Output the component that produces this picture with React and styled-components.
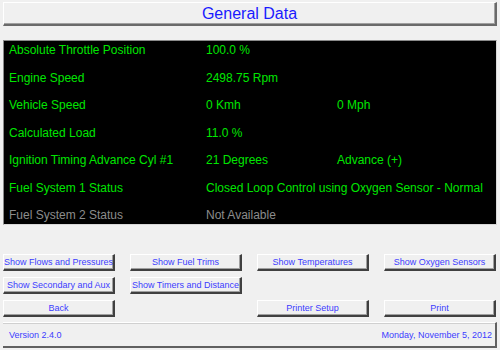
import React from "react";
import styled, { createGlobalStyle } from "styled-components";

const GlobalStyle = createGlobalStyle`
  html, body {
    margin: 0;
    padding: 0;
    background: #f0f0f0;
  }
  body {
    font-family: "Liberation Sans", Arial, sans-serif;
  }
`;

const Screen = styled.div`
  width: 500px;
  height: 350px;
  box-sizing: border-box;
  padding: 2px 3px 0 3px;
  display: flex;
  flex-direction: column;
  background: #f0f0f0;
  overflow: hidden;
`;

const TitleBar = styled.div`
  height: 24px;
  box-sizing: border-box;
  border-top: 1px solid #ffffff;
  border-left: 1px solid #ffffff;
  border-right: 2px solid #6a6a6a;
  border-bottom: 2px solid #6a6a6a;
  box-shadow: inset -1px -1px 0 #a0a0a0;
  display: flex;
  align-items: center;
  justify-content: center;
  font-size: 16px;
  color: #1a1aff;
`;

const DataPanel = styled.div`
  margin-top: 14px;
  height: 185px;
  box-sizing: border-box;
  background: #000;
  border-top: 1px solid #8a8a8a;
  border-left: 1px solid #8a8a8a;
  border-right: 1px solid #d8d8d8;
  border-bottom: 1px solid #d8d8d8;
  padding: 2px 0 0 5px;
  display: grid;
  grid-template-columns: 197px 131px 1fr;
  grid-auto-rows: 14px;
  row-gap: 13.5px;
  font-size: 12px;
  line-height: 14px;
`;

const Cell = styled.div`
  color: ${(p) => (p.$dim ? "#8c8c8c" : "#00e600")};
  grid-column: ${(p) => p.$span || "auto"};
  white-space: nowrap;
`;

const ButtonGrid = styled.div`
  margin-top: 29px;
  display: grid;
  grid-template-columns: repeat(4, 112px);
  grid-auto-rows: 17px;
  column-gap: 15px;
  row-gap: 6px;
`;

const PanelButton = styled.button`
  grid-column: ${(p) => p.$col || "auto"};
  margin: 0;
  padding: 0;
  box-sizing: border-box;
  background: #f0f0f0;
  border-top: 1px solid #ffffff;
  border-left: 1px solid #ffffff;
  border-right: 2px solid #404040;
  border-bottom: 2px solid #404040;
  box-shadow: inset -1px -1px 0 #a0a0a0;
  font-family: "Liberation Sans", Arial, sans-serif;
  font-size: 9px;
  color: #3c3cff;
  white-space: nowrap;
  display: flex;
  align-items: center;
  justify-content: center;
  cursor: pointer;
`;

const StatusBar = styled.div`
  margin-top: 5px;
  height: 26px;
  box-sizing: border-box;
  border-top: 1px solid #ffffff;
  border-right: 2px solid #606060;
  border-bottom: 2px solid #606060;
  box-shadow: inset 0 1px 0 #d0d0d0;
  padding: 0 3px 0 6px;
  display: flex;
  align-items: center;
  justify-content: space-between;
  font-size: 9px;
  color: #3c3cff;
`;

const rows = [
  { label: "Absolute Throttle Position", value: "100.0 %" },
  { label: "Engine Speed", value: "2498.75 Rpm" },
  { label: "Vehicle Speed", value: "0 Kmh", extra: "0 Mph" },
  { label: "Calculated Load", value: "11.0 %" },
  { label: "Ignition Timing Advance Cyl #1", value: "21 Degrees", extra: "Advance (+)" },
  { label: "Fuel System 1 Status", value: "Closed Loop Control using Oxygen Sensor - Normal", wide: true },
  { label: "Fuel System 2 Status", value: "Not Available", dim: true },
];

const App = () => {
  return (
    <>
      <GlobalStyle />
      <Screen>
        <TitleBar>General Data</TitleBar>
        <DataPanel>
          {rows.map((r) => (
            <React.Fragment key={r.label}>
              <Cell $dim={r.dim}>{r.label}</Cell>
              <Cell $dim={r.dim} $span={r.wide || !r.extra ? "2 / span 2" : undefined}>
                {r.value}
              </Cell>
              {r.extra && <Cell>{r.extra}</Cell>}
            </React.Fragment>
          ))}
        </DataPanel>
        <ButtonGrid>
          <PanelButton>Show Flows and Pressures</PanelButton>
          <PanelButton>Show Fuel Trims</PanelButton>
          <PanelButton>Show Temperatures</PanelButton>
          <PanelButton>Show Oxygen Sensors</PanelButton>
          <PanelButton $col="1">Show Secondary and Aux</PanelButton>
          <PanelButton>Show Timers and Distance</PanelButton>
          <PanelButton $col="1">Back</PanelButton>
          <PanelButton $col="3">Printer Setup</PanelButton>
          <PanelButton $col="4">Print</PanelButton>
        </ButtonGrid>
        <StatusBar>
          <span>Version 2.4.0</span>
          <span>Monday, November 5, 2012</span>
        </StatusBar>
      </Screen>
    </>
  );
};

export default App;
